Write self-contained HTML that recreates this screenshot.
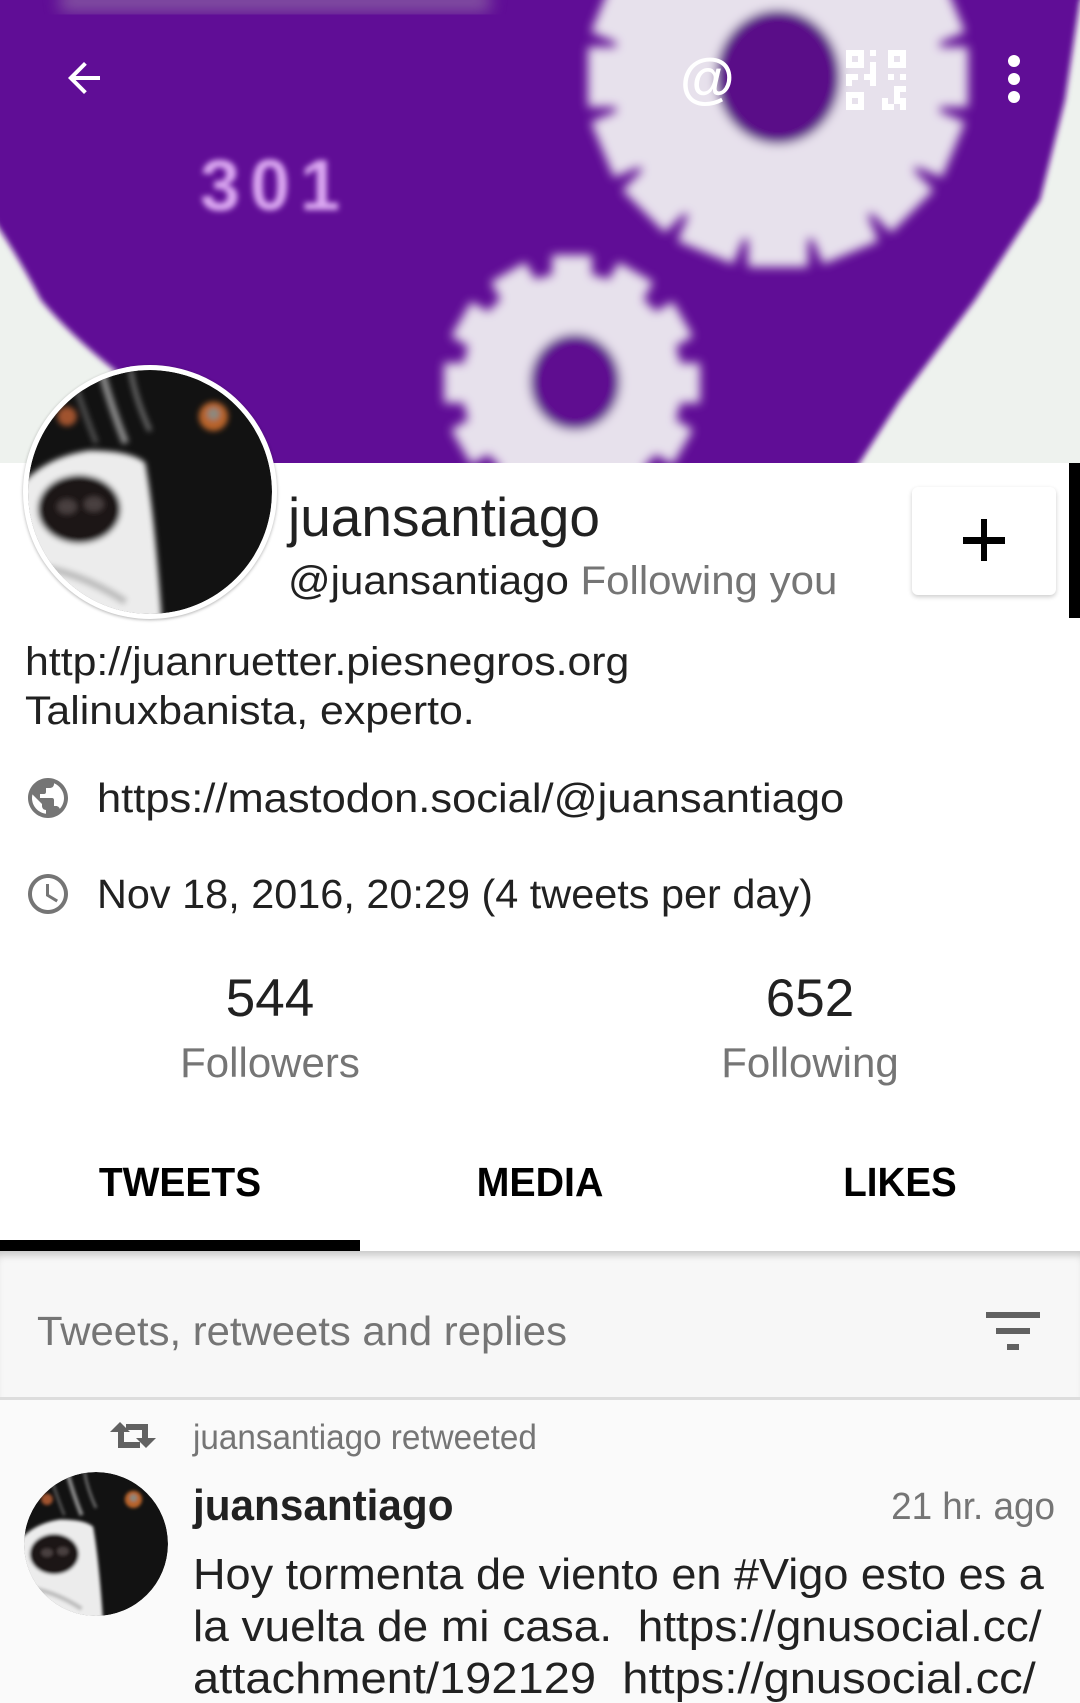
<!DOCTYPE html>
<html><head><meta charset="utf-8"><style>
*{margin:0;padding:0;box-sizing:border-box}
body{width:1080px;height:1699px;overflow:hidden;background:#fafafa;font-family:"Liberation Sans",sans-serif;position:relative}
.t{position:absolute;white-space:nowrap;line-height:1;transform-origin:left center}
.c{transform-origin:center center}
</style></head><body>
<!-- banner -->
<div style="position:absolute;left:0;top:0;width:1080px;height:463px;overflow:hidden;background:#eef2ee">
<svg width="1080" height="463" style="position:absolute;left:0;top:0">
<defs><filter id="bl"><feGaussianBlur stdDeviation="5"/></filter><filter id="bl2"><feGaussianBlur stdDeviation="3"/></filter><filter id="bl3"><feGaussianBlur stdDeviation="8"/></filter></defs>
<path d="M-20 -20 L1100 -20 L1080 0 L1065 100 L1040 200 L975 300 L900 400 L855 470 L230 470 Q160 425 117 372 Q70 335 41 300 Q15 250 -20 200 Z" fill="#600a96" filter="url(#bl2)"/>
<g filter="url(#bl)">
<g fill="#e7e1ec">
<circle cx="778" cy="77" r="165"/>
<g transform="translate(778 77)"><rect x="-30" y="-190" width="60" height="380"/><rect x="-190" y="-30" width="380" height="60"/><rect x="-30" y="-190" width="60" height="380" transform="rotate(45)"/><rect x="-30" y="-190" width="60" height="380" transform="rotate(-45)"/><rect x="-30" y="-190" width="60" height="380" transform="rotate(22.5)"/><rect x="-30" y="-190" width="60" height="380" transform="rotate(-22.5)"/><rect x="-30" y="-190" width="60" height="380" transform="rotate(67.5)"/><rect x="-30" y="-190" width="60" height="380" transform="rotate(-67.5)"/></g>
<circle cx="572" cy="383" r="110"/>
<g transform="translate(572 383)"><rect x="-20" y="-128" width="40" height="256"/><rect x="-128" y="-20" width="256" height="40"/><rect x="-20" y="-128" width="40" height="256" transform="rotate(30)"/><rect x="-20" y="-128" width="40" height="256" transform="rotate(60)"/><rect x="-20" y="-128" width="40" height="256" transform="rotate(-30)"/><rect x="-20" y="-128" width="40" height="256" transform="rotate(-60)"/></g>
</g>
<ellipse cx="778" cy="77" rx="62" ry="67" fill="#5a0a88"/>
<ellipse cx="575" cy="382" rx="45" ry="48" fill="#5e0a90"/>
</g>
<rect x="60" y="-10" width="430" height="22" fill="#9a80a8" opacity=".6" filter="url(#bl3)"/>
<text x="200" y="210" font-family="Liberation Sans" font-weight="bold" font-size="72" fill="#dba8f2" filter="url(#bl2)" textLength="140">301</text>
</svg>
<!-- icons -->
<svg width="48" height="48" style="position:absolute;top:54px;left:60px" viewBox="0 0 24 24"><path d="M20 11H7.8l5.6-5.6L12 4l-8 8 8 8 1.4-1.4L7.8 13H20z" fill="#fff"/></svg>
<div style="position:absolute;left:680px;top:50px;font-size:56px;font-weight:bold;color:#fff;line-height:1">@</div>
<svg width="60" height="60" viewBox="0 0 20 20" style="position:absolute;left:846px;top:50px" fill="#fff">
<path d="M0 0h6v6H0zM2 2v2h2V2zM14 0h6v6h-6zM16 2v2h2V2zM0 14h6v6H0zM2 16v2h2v-2zM8 0h2v2H8zM8 4h2v4H8zM0 8h4v2H2v2H0zM6 8h4v4h-2v-2H6zM14 8h2v2h-2zM18 8h2v2h-2zM16 12h4v2h-2v2h2v4h-2v-2h-2v2h-4v-4h2v2h2z"/></svg>
<div style="position:absolute;left:1008px;top:55px;width:12px;height:12px;border-radius:50%;background:#fff"></div>
<div style="position:absolute;left:1008px;top:73px;width:12px;height:12px;border-radius:50%;background:#fff"></div>
<div style="position:absolute;left:1008px;top:91px;width:12px;height:12px;border-radius:50%;background:#fff"></div>
</div>
<!-- profile area -->
<div style="position:absolute;left:0;top:463px;width:1080px;height:788px;background:#fff"></div>
<div style="position:absolute;left:1069px;top:463px;width:11px;height:155px;background:#000"></div>
<svg width="0" height="0" style="position:absolute">
<defs>
<filter id="db"><feGaussianBlur stdDeviation="1.2"/></filter>
<clipPath id="dc"><circle cx="50" cy="50" r="50"/></clipPath>
<symbol id="dog" viewBox="0 0 100 100">
<g clip-path="url(#dc)">
<circle cx="50" cy="50" r="50" fill="#121212"/>
<g filter="url(#db)">
<path d="M30 0 Q34 15 40 30" stroke="#8a8a8a" stroke-width="3" fill="none"/>
<path d="M42 0 Q44 12 50 25" stroke="#6a6a6a" stroke-width="2" fill="none"/>
<path d="M20 8 Q24 20 28 30" stroke="#555" stroke-width="2" fill="none"/>
<path d="M-5 50 Q5 36 25 33 Q42 33 48 38 Q52 60 55 105 L-5 105 Z" fill="#ececec"/>
<path d="M0 80 Q20 82 40 95" stroke="#bbb" stroke-width="3" fill="none"/>
<ellipse cx="21" cy="57" rx="17" ry="14" fill="#1e1614"/>
<ellipse cx="16" cy="56" rx="4" ry="3" fill="#4a4040"/>
<ellipse cx="27" cy="55" rx="4" ry="3" fill="#4a4040"/>
<circle cx="76" cy="19" r="6" fill="#b8642a"/><circle cx="76" cy="18" r="2.5" fill="#8a8a80"/>
<circle cx="16" cy="19" r="4" fill="#a0522d"/>
</g></g>
</symbol></defs></svg>
<!-- avatar -->
<div style="position:absolute;left:23px;top:365px;width:254px;height:254px;border-radius:50%;background:#fff;box-shadow:0 1px 3px rgba(0,0,0,.3)"></div>
<svg width="244" height="244" style="position:absolute;left:28px;top:370px"><use href="#dog"/></svg>
<div class="t" style="left:288px;top:490px;font-size:55px;color:#212121;transform:scaleX(1.0)">juansantiago</div>
<div class="t" style="left:288px;top:561px;font-size:40px;color:#212121;transform:scaleX(1.05)">@juansantiago <span style="color:#757575">Following you</span></div>
<div style="position:absolute;left:912px;top:487px;width:144px;height:108px;background:#fff;border-radius:6px;box-shadow:0 2px 5px rgba(0,0,0,.2)"></div>
<div style="position:absolute;left:963px;top:537px;width:42px;height:7px;background:#000"></div>
<div style="position:absolute;left:981px;top:519px;width:6px;height:42px;background:#000"></div>
<div class="t" style="left:25px;top:642px;font-size:40px;color:#212121;transform:scaleX(1.07)">http://juanruetter.piesnegros.org</div>
<div class="t" style="left:25px;top:691px;font-size:40px;color:#212121;transform:scaleX(1.07)">Talinuxbanista, experto.</div>
<svg width="48" height="48" viewBox="0 0 24 24" style="position:absolute;left:24px;top:774px"><path d="M12 2C6.5 2 2 6.5 2 12s4.5 10 10 10 10-4.5 10-10S17.5 2 12 2zm-1 17.9c-4-.5-7-3.900-7-7.9 0-.6.1-1.2.2-1.8L9 15v1c0 1.1.9 2 2 2v1.9zm6.9-2.5c-.3-.8-1-1.4-1.9-1.4h-1v-3c0-.6-.4-1-1-1H8v-2h2c.6 0 1-.4 1-1V7h2c1.1 0 2-.9 2-2v-.4c2.9 1.2 5 4.1 5 7.4 0 2.1-.8 4-2.1 5.4z" fill="#757575"/></svg>
<div class="t" style="left:97px;top:778px;font-size:41px;color:#212121;transform:scaleX(1.06)">https://mastodon.social/@juansantiago</div>
<svg width="48" height="48" viewBox="0 0 24 24" style="position:absolute;left:24px;top:870px"><path d="M12 2C6.5 2 2 6.5 2 12s4.5 10 10 10 10-4.5 10-10S17.5 2 12 2zm0 18c-4.4 0-8-3.6-8-8s3.6-8 8-8 8 3.6 8 8-3.6 8-8 8zm.5-13H11v6l5.2 3.2.8-1.3-4.5-2.7z" fill="#757575"/></svg>
<div class="t" style="left:97px;top:874px;font-size:41px;color:#212121;transform:scaleX(1.01)">Nov 18, 2016, 20:29 (4 tweets per day)</div>
<div class="t c" style="left:0;width:540px;text-align:center;top:972px;font-size:53px;color:#212121">544</div>
<div class="t c" style="left:0;width:540px;text-align:center;top:1042px;font-size:42px;color:#757575">Followers</div>
<div class="t c" style="left:540px;width:540px;text-align:center;top:972px;font-size:53px;color:#212121">652</div>
<div class="t c" style="left:540px;width:540px;text-align:center;top:1042px;font-size:42px;color:#757575">Following</div>
<div class="t c" style="left:0;width:360px;text-align:center;top:1162px;font-size:41px;font-weight:bold;color:#000;transform:scaleX(.95)">TWEETS</div>
<div class="t c" style="left:360px;width:360px;text-align:center;top:1162px;font-size:41px;font-weight:bold;color:#000;transform:scaleX(.96)">MEDIA</div>
<div class="t c" style="left:720px;width:360px;text-align:center;top:1162px;font-size:41px;font-weight:bold;color:#000;transform:scaleX(.94)">LIKES</div>
<div style="position:absolute;left:0;top:1240px;width:360px;height:11px;background:#000"></div>
<!-- filter bar -->
<div style="position:absolute;left:0;top:1251px;width:1080px;height:146px;background:#f7f7f7;box-shadow:inset 0 8px 8px -4px rgba(0,0,0,.2)"></div>
<div class="t" style="left:37px;top:1311px;font-size:41px;color:#757575;transform:scaleX(1.02)">Tweets, retweets and replies</div>
<div style="position:absolute;left:986px;top:1312px;width:54px;height:6px;background:#616161"></div>
<div style="position:absolute;left:996px;top:1328px;width:34px;height:6px;background:#616161"></div>
<div style="position:absolute;left:1007px;top:1344px;width:12px;height:6px;background:#616161"></div>
<div style="position:absolute;left:0;top:1397px;width:1080px;height:3px;background:#ddd"></div>
<!-- tweet -->
<svg width="46" height="28" viewBox="0 0 46 28" style="position:absolute;left:110px;top:1422px" fill="#616161"><path d="M0 10 L10 0 L20 10 H14 V20 H30 V26 H8 V10 Z"/><path d="M46 16 L36 26 L26 16 H32 V8 H16 V2 H38 V16 Z"/></svg>
<div class="t" style="left:193px;top:1420px;font-size:35px;color:#757575;transform:scaleX(.95)">juansantiago retweeted</div>
<svg width="144" height="144" style="position:absolute;left:24px;top:1472px"><use href="#dog"/></svg>
<div class="t" style="left:193px;top:1484px;font-size:44px;font-weight:bold;color:#212121;transform:scaleX(.96)">juansantiago</div>
<div class="t" style="right:25px;top:1488px;font-size:38px;color:#757575;transform-origin:right center;transform:scaleX(.97)">21 hr. ago</div>
<div class="t" style="left:193px;top:1553px;font-size:44px;color:#212121;transform:scaleX(1.024)">Hoy tormenta de viento en #Vigo esto es a</div>
<div class="t" style="left:193px;top:1605px;font-size:44px;color:#212121;transform:scaleX(1.045)">la vuelta de mi casa.&nbsp; https://gnusocial.cc/</div>
<div class="t" style="left:193px;top:1657px;font-size:44px;color:#212121;transform:scaleX(1.07)">attachment/192129&nbsp; https://gnusocial.cc/</div>
</body></html>
